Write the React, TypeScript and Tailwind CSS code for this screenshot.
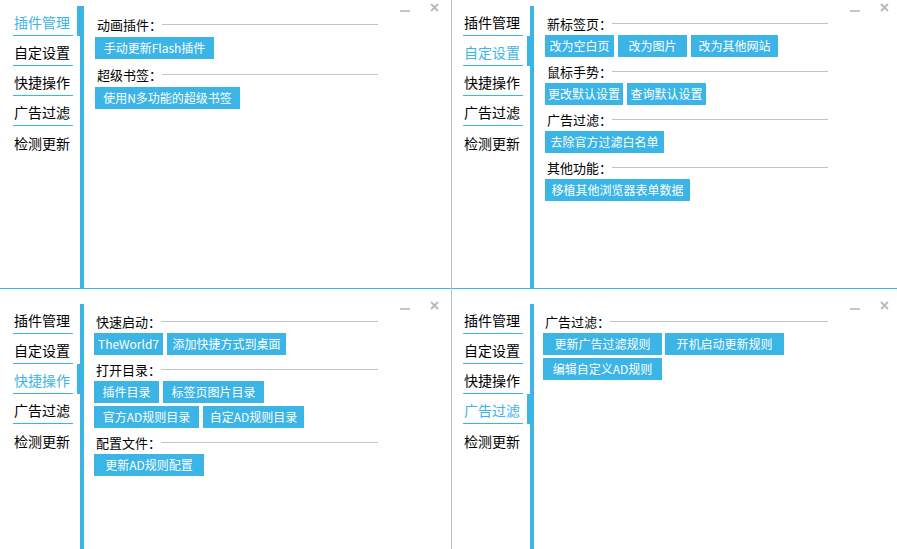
import React from "react";

const NAV = ["插件管理", "自定设置", "快捷操作", "广告过滤", "检测更新"];

type Btn = { label: string; w: string };
type Section = { title: string; rows: Btn[][] };

const PLUGINS: Section[] = [
  { title: "动画插件", rows: [[{ label: "手动更新Flash插件", w: "w-[119px]" }]] },
  { title: "超级书签", rows: [[{ label: "使用N多功能的超级书签", w: "w-[145px]" }]] },
];

const CUSTOM: Section[] = [
  {
    title: "新标签页",
    rows: [
      [
        { label: "改为空白页", w: "w-[69px]" },
        { label: "改为图片", w: "w-[69px]" },
        { label: "改为其他网站", w: "w-[87px]" },
      ],
    ],
  },
  {
    title: "鼠标手势",
    rows: [
      [
        { label: "更改默认设置", w: "w-[78px]" },
        { label: "查询默认设置", w: "w-[79px]" },
      ],
    ],
  },
  { title: "广告过滤", rows: [[{ label: "去除官方过滤白名单", w: "w-[119px]" }]] },
  { title: "其他功能", rows: [[{ label: "移植其他浏览器表单数据", w: "w-[145px]" }]] },
];

const SHORTCUTS: Section[] = [
  {
    title: "快速启动",
    rows: [
      [
        { label: "TheWorld7", w: "w-[69px]" },
        { label: "添加快捷方式到桌面", w: "w-[119px]" },
      ],
    ],
  },
  {
    title: "打开目录",
    rows: [
      [
        { label: "插件目录", w: "w-[65px]" },
        { label: "标签页图片目录", w: "w-[101px]" },
      ],
      [
        { label: "官方AD规则目录", w: "w-[105px]" },
        { label: "自定AD规则目录", w: "w-[101px]" },
      ],
    ],
  },
  { title: "配置文件", rows: [[{ label: "更新AD规则配置", w: "w-[110px]" }]] },
];

const ADBLOCK: Section[] = [
  {
    title: "广告过滤",
    rows: [
      [
        { label: "更新广告过滤规则", w: "w-[119px]" },
        { label: "开机启动更新规则", w: "w-[119px]" },
      ],
      [{ label: "编辑自定义AD规则", w: "w-[119px]" }],
    ],
  },
];

function Sidebar({ active, shift }: { active: number; shift?: boolean }) {
  return (
    <div className={`flex shrink-0 pt-[6px] ${shift ? "pl-[11px]" : "pl-[13px]"}`}>
      <div className="flex w-[60px] flex-col">
        {NAV.map((name, i) => (
          <div
            key={name}
            className={`flex h-[30px] items-center pl-px pt-[3px] text-[14px] leading-none ${
              i < NAV.length - 1 ? "border-b border-[#3bb4e6]" : ""
            } ${i === active ? "text-[#3bb4e6]" : "text-black"}`}
          >
            {name}
          </div>
        ))}
      </div>
      <div className="ml-[4px] flex w-[7px] flex-col items-end">
        {NAV.map((name, i) => (
          <div key={name} className={`h-[30px] bg-[#3bb4e6] ${i === active ? "w-[7px]" : "w-[4px]"}`} />
        ))}
        <div className="w-[4px] flex-1 bg-[#3bb4e6]" />
      </div>
    </div>
  );
}

function WindowControls() {
  return (
    <div className="ml-[22px] flex shrink-0 items-start gap-[20px] pt-[3px]">
      <div className="mt-[7px] h-[2px] w-[10px] bg-[#c6c6c6]" />
      <svg width="9" height="9" viewBox="0 0 9 9">
        <path d="M1 1L8 8M8 1L1 8" stroke="#b9b9b9" strokeWidth="1.8" />
      </svg>
    </div>
  );
}

function Panel({
  active,
  sections,
  shift,
  bottom,
  pad,
  labelH = "h-[24px]",
  gap = "gap-x-[4px]",
}: {
  active: number;
  sections: Section[];
  shift?: boolean;
  bottom?: boolean;
  pad: string;
  labelH?: string;
  gap?: string;
}) {
  return (
    <div className={`flex h-full ${bottom ? "pt-[9px]" : ""}`}>
      <Sidebar active={active} shift={shift} />
      <div className={`w-[294px] shrink-0 pt-[11px] ${pad}`}>
        {sections.map((s) => (
          <div key={s.title} className="mb-[2px]">
            <div className={`flex items-center ${labelH}`}>
              <span className="pl-[2px] text-[13px] leading-none text-black">{s.title}：</span>
              <div className="h-px flex-1 bg-[#c3c3c3]" />
            </div>
            <div className="flex flex-col gap-y-[3px]">
              {s.rows.map((row, ri) => (
                <div key={ri} className={`flex ${gap}`}>
                  {row.map((b) => (
                    <div
                      key={b.label}
                      className={`flex h-[22px] items-center justify-center bg-[#3bb4e6] text-[12px] leading-none text-white ${b.w}`}
                    >
                      {b.label}
                    </div>
                  ))}
                </div>
              ))}
            </div>
          </div>
        ))}
      </div>
      <WindowControls />
    </div>
  );
}

export default function App() {
  return (
    <div className="flex h-[549px] w-[897px] flex-col overflow-hidden bg-white font-['Noto_Sans_CJK_SC',sans-serif]">
      <div className="flex h-[288px]">
        <div className="w-[451px] shrink-0">
          <Panel active={0} sections={PLUGINS} pad="pl-[11px]" labelH="h-[26px]" />
        </div>
        <div className="w-px bg-[#bfbfbf]" />
        <div className="flex-1">
          <Panel active={1} sections={CUSTOM} pad="pl-[11px]" shift />
        </div>
      </div>
      <div className="flex h-px">
        <div className="w-[451px] bg-[#3bb4e6]" />
        <div className="w-px bg-[#bfbfbf]" />
        <div className="flex-1 bg-[#3bb4e6]" />
      </div>
      <div className="flex flex-1">
        <div className="w-[451px] shrink-0">
          <Panel active={2} sections={SHORTCUTS} pad="pl-[10px]" bottom />
        </div>
        <div className="w-px bg-[#bfbfbf]" />
        <div className="flex-1">
          <Panel active={3} sections={ADBLOCK} pad="pl-[9px]" gap="gap-x-[3px]" shift bottom />
        </div>
      </div>
    </div>
  );
}
